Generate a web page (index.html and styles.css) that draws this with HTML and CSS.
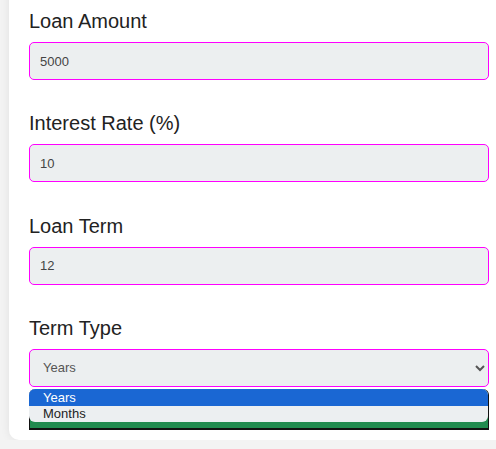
FILE: index.html
```html
<!DOCTYPE html>
<html lang="en">
<head>
<meta charset="utf-8">
<title>Loan Calculator</title>
<link rel="stylesheet" href="styles.css">
</head>
<body>
<div class="card">
  <div class="group">
    <label class="label" for="amount">Loan Amount</label>
    <input class="field" id="amount" type="text" value="5000">
  </div>
  <div class="group">
    <label class="label" for="rate">Interest Rate (%)</label>
    <input class="field" id="rate" type="text" value="10">
  </div>
  <div class="group">
    <label class="label" for="term">Loan Term</label>
    <input class="field" id="term" type="text" value="12">
  </div>
  <div class="group last">
    <label class="label" for="type">Term Type</label>
    <div class="select-wrap">
      <select class="field select" id="type">
        <option selected>Years</option>
        <option>Months</option>
      </select>
      <div class="popup">
        <div class="popup-green">
          <div class="list">
            <div class="opt active">Years</div>
            <div class="opt">Months</div>
          </div>
        </div>
      </div>
    </div>
  </div>
</div>
</body>
</html>
```

FILE: styles.css
```css
html, body {
  margin: 0;
  padding: 0;
  overflow: hidden;
  background: #f3f3f3;
  font-family: "Liberation Sans", Arial, sans-serif;
}

.card {
  margin: -20px 0 0 9px;
  width: calc(100% - 9px);
  padding: 29px 0 53px 20px;
  background: #ffffff;
  border-radius: 0 0 0 10px;
  box-shadow: 0 0 10px rgba(0, 0, 0, 0.08);
  box-sizing: border-box;
}

.group {
  display: flex;
  flex-direction: column;
  margin-bottom: 31.33px;
}

.group.last {
  margin-bottom: 0;
}

.label {
  font-size: 20px;
  line-height: 24px;
  color: #222222;
  margin-bottom: 9px;
}

.field {
  box-sizing: border-box;
  width: 460px;
  height: 38px;
  margin: 0;
  padding: 0 10px;
  border: 1px solid #ff00ff;
  border-radius: 5px;
  background: #eceff0;
  font-family: "Liberation Sans", Arial, sans-serif;
  font-size: 13px;
  color: #444444;
  outline: none;
}

.select-wrap {
  position: relative;
  width: 460px;
}

.select {
  padding: 0 9px;
  color: #555555;
}

.popup {
  position: absolute;
  top: 40px;
  left: 0;
  width: 460px;
  height: 41px;
  box-sizing: border-box;
  padding: 0 1px 2px 1px;
  background: #111111;
  border-radius: 6px 6px 0 0;
}

.popup-green {
  height: 39px;
  background: #218b4f;
  border-radius: 6px 6px 0 0;
}

.list {
  height: 33px;
  background: #eceff1;
  border-radius: 6px;
  overflow: hidden;
  margin-left: -1px;
}

.opt {
  height: 16px;
  line-height: 16px;
  padding-left: 14px;
  font-size: 13px;
  color: #222222;
}

.opt.active {
  height: 17px;
  line-height: 17px;
  background: #1a67d3;
  color: #ffffff;
}
```
